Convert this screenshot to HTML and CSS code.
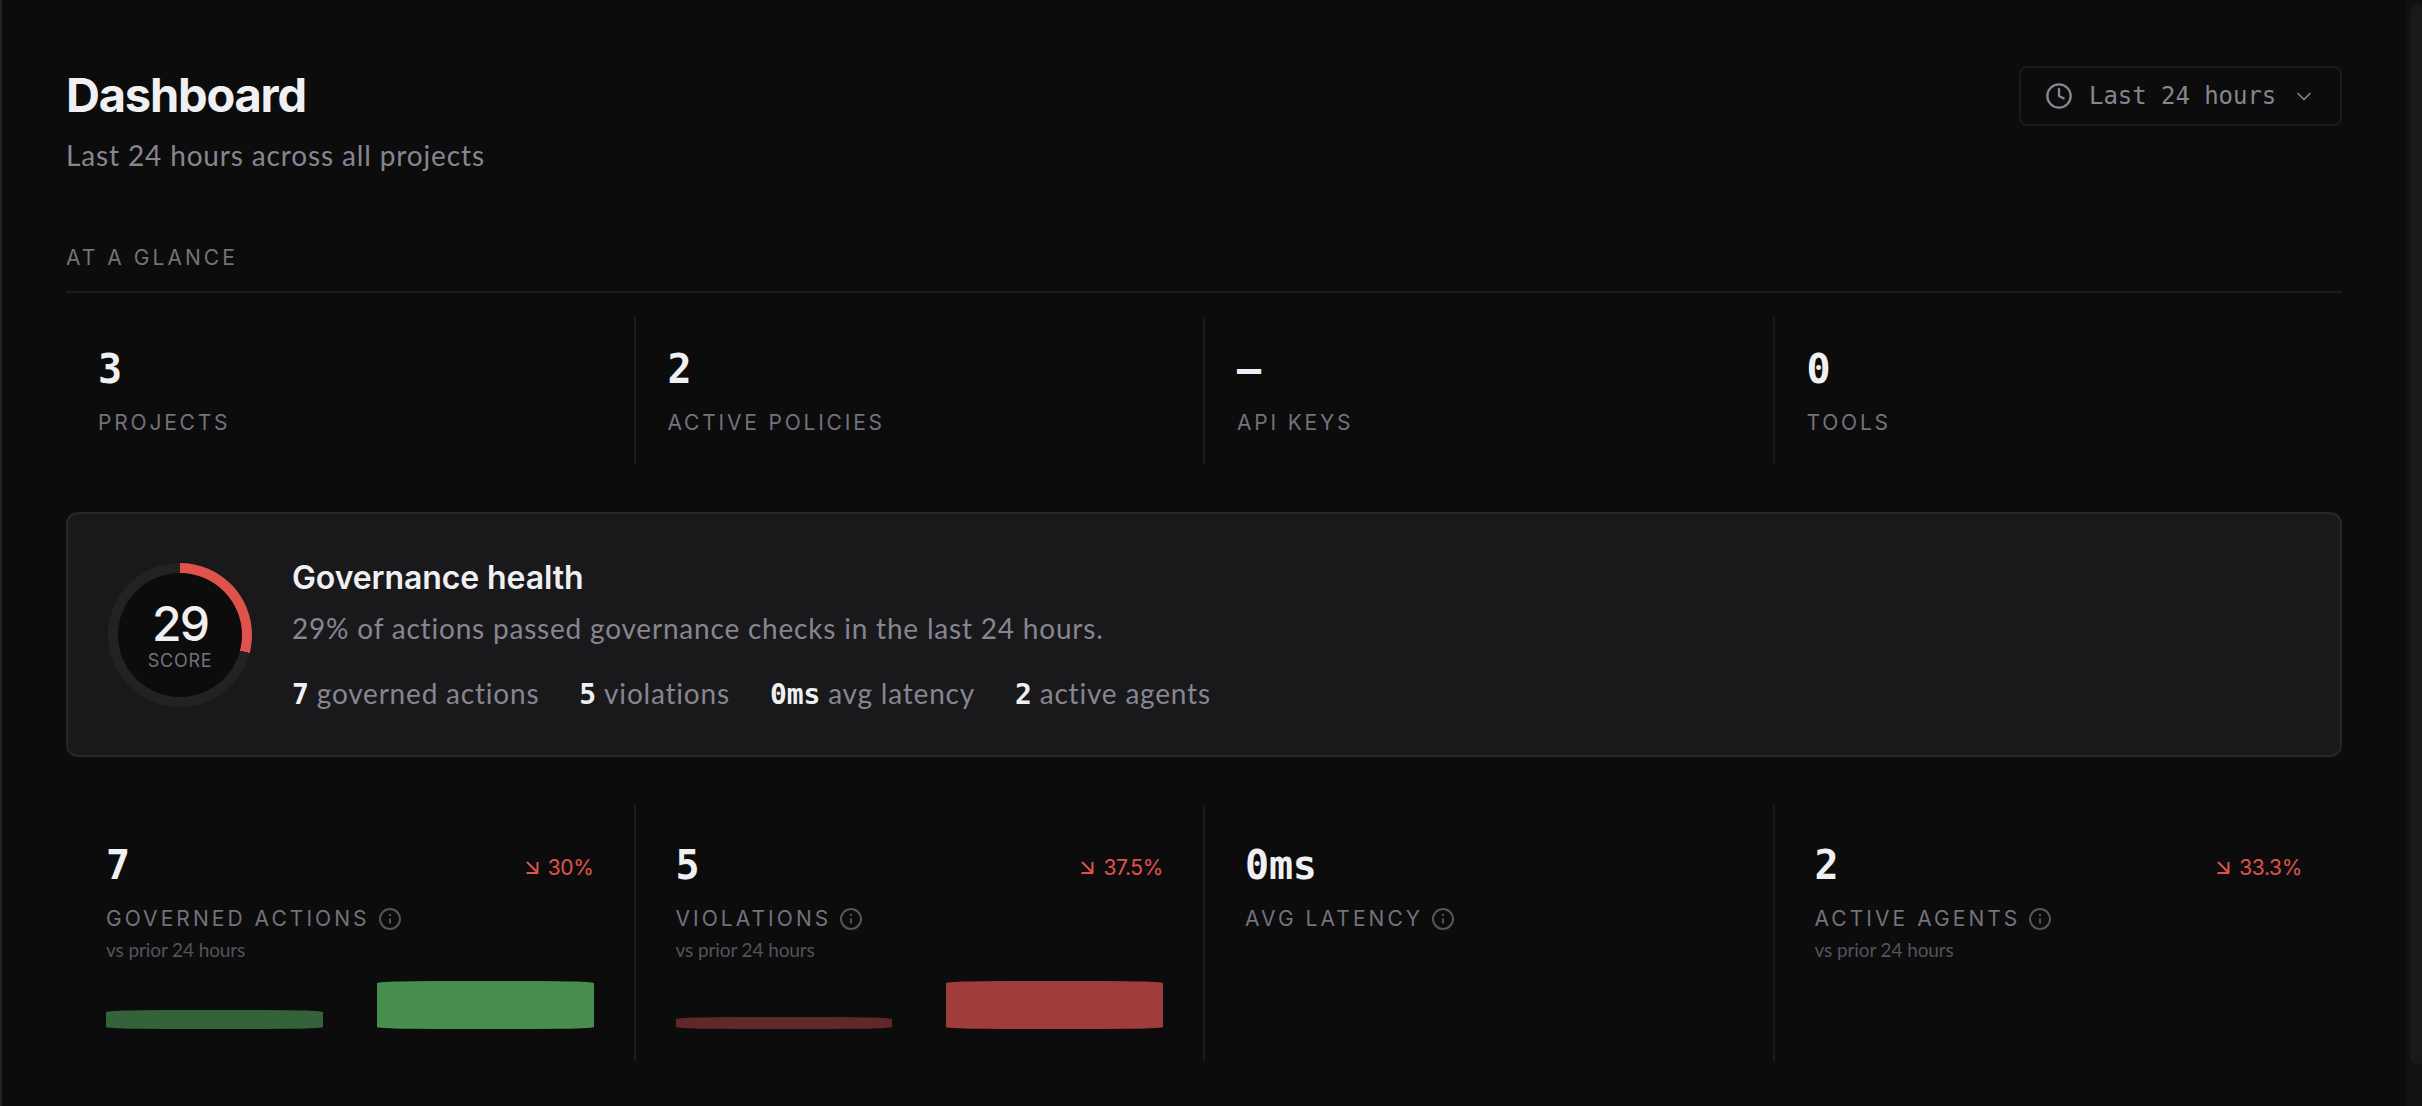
FILE: index.html
```html
<!DOCTYPE html>
<html lang="en">
<head>
<meta charset="utf-8">
<title>Dashboard</title>
<link rel="stylesheet" href="styles.css">
</head>
<body>
<svg class="sprite" aria-hidden="true">
  <symbol id="info" viewBox="0 0 24 24"><circle cx="12" cy="12" r="10"/><path d="M12 16.5v-5M12 9V7"/></symbol>
  <symbol id="down" viewBox="0 0 24 24"><path d="m7 6 10.500 10.500M17.500 6v11H6.500"/></symbol>
</svg>
<main class="page">
  <header class="header">
    <div>
      <h1 class="title">Dashboard</h1>
      <p class="subtitle">Last 24 hours across all projects</p>
    </div>
    <button class="range" type="button">
      <svg class="clock" viewBox="0 0 24 24"><circle cx="12" cy="12" r="10"/><path d="M12 6v6l4 2"/></svg>
      <span class="range-text">Last 24 hours</span>
      <svg class="chevron" viewBox="0 0 24 24"><path d="m5.5 9 6.5 6.5L18.500 9"/></svg>
    </button>
  </header>

  <h2 class="section label">AT A GLANCE</h2>

  <section class="grid glance">
    <div class="cell"><div class="value">3</div><div class="label">PROJECTS</div></div>
    <div class="cell"><div class="value">2</div><div class="label">ACTIVE POLICIES</div></div>
    <div class="cell"><div class="value">—</div><div class="label">API KEYS</div></div>
    <div class="cell"><div class="value">0</div><div class="label">TOOLS</div></div>
  </section>

  <section class="health">
    <div class="ring">
      <div class="ring-inner">
        <div class="score">29</div>
        <div class="score-label">SCORE</div>
      </div>
    </div>
    <div class="health-body">
      <h3 class="health-title">Governance health</h3>
      <p class="health-desc">29% of actions passed governance checks in the last 24 hours.</p>
      <div class="health-stats">
        <span class="stat"><strong>7</strong>governed actions</span>
        <span class="stat"><strong>5</strong>violations</span>
        <span class="stat"><strong>0ms</strong>avg latency</span>
        <span class="stat"><strong>2</strong>active agents</span>
      </div>
    </div>
  </section>

  <section class="grid metrics">
    <div class="cell">
      <div class="head"><div class="value">7</div><div class="trend"><svg><use href="#down"/></svg>30%</div></div>
      <div class="label">GOVERNED ACTIONS<svg><use href="#info"/></svg></div>
      <div class="prior">vs prior 24 hours</div>
      <div class="bars green"><i style="height:40%"></i><i style="height:100%"></i></div>
    </div>
    <div class="cell">
      <div class="head"><div class="value">5</div><div class="trend"><svg><use href="#down"/></svg>37.5%</div></div>
      <div class="label">VIOLATIONS<svg><use href="#info"/></svg></div>
      <div class="prior">vs prior 24 hours</div>
      <div class="bars red"><i style="height:25%"></i><i style="height:100%"></i></div>
    </div>
    <div class="cell">
      <div class="head"><div class="value">0ms</div></div>
      <div class="label">AVG LATENCY<svg><use href="#info"/></svg></div>
    </div>
    <div class="cell">
      <div class="head"><div class="value">2</div><div class="trend"><svg><use href="#down"/></svg>33.3%</div></div>
      <div class="label">ACTIVE AGENTS<svg><use href="#info"/></svg></div>
      <div class="prior">vs prior 24 hours</div>
    </div>
  </section>
</main>
<div class="scrollbar"><div class="thumb"></div></div>
</body>
</html>
```
FILE: styles.css
```css
:root {
  --bg: #0c0c0c;
  --line: #1b1b1c;
  --text: #f0f0f2;
  --muted: #878590;
  --label: #74727c;
  --faint: #55535c;
  --red: #e0524c;
}

* { box-sizing: border-box; margin: 0; }

body {
  display: flex;
  height: 1106px;
  overflow: hidden;
  background: var(--bg);
  color: var(--text);
  font-family: Lato, "Liberation Sans", sans-serif;
}

.sprite { display: none; }

svg {
  fill: none;
  stroke: currentColor;
  stroke-width: 2;
  stroke-linejoin: round;
  flex: none;
}

.page {
  flex: 1;
  padding: 66px 64px 0;
  border-left: 2px solid #222223;
}

.header {
  display: flex;
  justify-content: space-between;
  align-items: flex-start;
}

.title {
  font: 700 47px/58px Inter, sans-serif;
  letter-spacing: -1.2px;
}

.subtitle {
  margin-top: 11px;
  font-size: 28px;
  line-height: 40px;
  letter-spacing: 0.86px;
  color: var(--muted);
}

.range {
  display: flex;
  align-items: center;
  gap: 16px;
  height: 60px;
  padding: 0 24px;
  border: 2px solid var(--line);
  border-radius: 8px;
  background: transparent;
  color: var(--muted);
}

.range-text {
  width: 187px;
  font: 24px/30px "DejaVu Sans Mono", monospace;
  letter-spacing: -0.05px;
  white-space: nowrap;
}

.clock { width: 28px; height: 28px; stroke-linecap: round; }
.chevron { width: 24px; height: 24px; stroke-width: 1.6; }

.label {
  display: flex;
  align-items: center;
  gap: 8px;
  font: 400 21px/30px Inter, sans-serif;
  letter-spacing: 3.05px;
  color: var(--label);
}

.label svg { width: 24px; height: 24px; color: var(--faint); }

.section {
  margin-top: 68px;
  padding-bottom: 18px;
  border-bottom: 2px solid var(--line);
}

.grid {
  display: grid;
  grid-template-columns: repeat(4, 1fr);
  gap: 2px;
  overflow: hidden;
  border-radius: 12px;
  background: var(--line);
}

.cell { background: var(--bg); }

.value {
  font: 700 40px/40px "DejaVu Sans Mono", monospace;
  letter-spacing: -0.2px;
}

.glance { height: 147px; margin-top: 24px; }
.glance .cell { padding: 32px; }
.glance .label { margin-top: 19px; letter-spacing: 2.8px; }

.health {
  display: flex;
  align-items: center;
  gap: 40px;
  height: 245px;
  margin-top: 48px;
  padding: 0 40px;
  border: 2px solid #272729;
  border-radius: 12px;
  background: #19191b;
}

.ring {
  width: 144px;
  height: 144px;
  padding: 10px;
  border-radius: 50%;
  background: conic-gradient(var(--red) 29%, #222224 0);
}

.ring-inner {
  display: flex;
  flex-direction: column;
  align-items: center;
  justify-content: center;
  height: 100%;
  border-radius: 50%;
  background: var(--bg);
}

.score {
  font: 500 48px/50px Inter, sans-serif;
  letter-spacing: -2px;
}

.score-label {
  margin-top: 2px;
  font: 18px/20px Inter, sans-serif;
  letter-spacing: 0.74px;
  color: var(--label);
}

.health-body { padding-top: 4px; }

.health-title {
  font: 600 32px/40px Inter, sans-serif;
  letter-spacing: -0.1px;
}

.health-desc,
.health-stats {
  font-size: 28px;
  line-height: 40px;
  letter-spacing: 0.8px;
  color: var(--muted);
}

.health-desc { margin-top: 10px; }
.health-stats { display: flex; gap: 40px; margin-top: 25px; }
.stat { display: flex; align-items: baseline; gap: 8px; }

.stat strong {
  font: 700 28px/40px "DejaVu Sans Mono", monospace;
  letter-spacing: -0.1px;
  color: var(--text);
}

.metrics { height: 256px; margin-top: 48px; }
.metrics .cell { padding: 40px 40px 0; }
.metrics .label { margin-top: 15px; }

.head {
  display: flex;
  justify-content: space-between;
  align-items: flex-start;
  height: 44px;
}

.trend {
  display: flex;
  align-items: center;
  gap: 4px;
  height: 30px;
  margin-top: 8px;
  font: 21px/30px Inter, sans-serif;
  letter-spacing: -0.35px;
  color: var(--red);
}

.trend svg { width: 24px; height: 24px; }

.prior {
  margin-top: 2px;
  font-size: 19px;
  line-height: 28px;
  letter-spacing: -0.1px;
  color: var(--faint);
}

.bars {
  display: flex;
  align-items: flex-end;
  gap: 54px;
  height: 48px;
  margin-top: 17px;
}

.bars i { flex: 1; border-radius: 60px / 2px; }
.green i { background: #488f4f; }
.green i:first-child { background: #34633b; }
.red i { background: #a03c3b; }
.red i:first-child { background: #602829; }

.scrollbar {
  width: 16px;
  padding: 4px 0 0 4px;
  background: #111112;
}

.thumb {
  height: 1061px;
  border-radius: 8px 4px 4px 8px;
  background: #19191b;
}
```
